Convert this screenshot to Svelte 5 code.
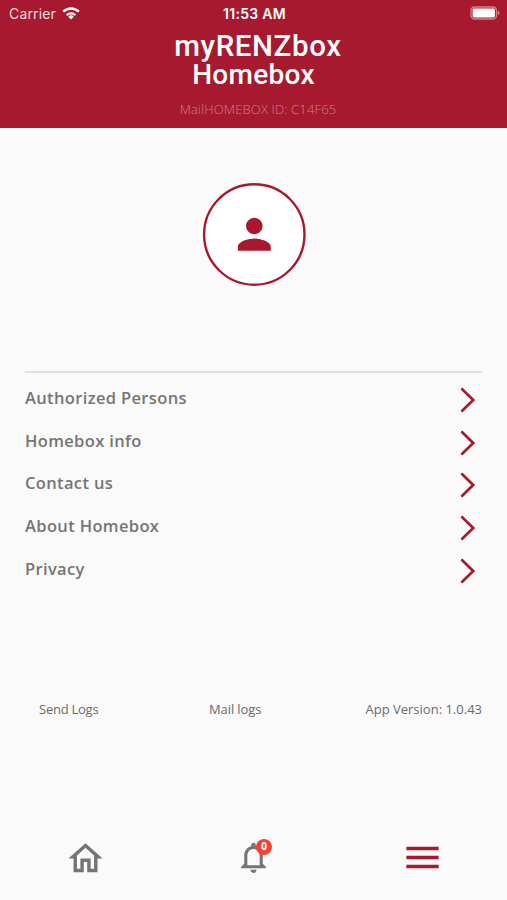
<script>
  let boxId = "C14F65";
  let version = "1.0.43";
  let notifications = 0;
  let active = "menu";

  const links = [
    "Authorized Persons",
    "Homebox info",
    "Contact us",
    "About Homebox",
    "Privacy"
  ];
</script>

<div class="screen">
  <header>
    <div class="status">
      <div class="carrier">
        <span>Carrier</span>
        <svg class="wifi" viewBox="0 0 18 14">
          <path d="M9 13.6l-2.8-2.9a4 4 0 0 1 5.6 0z" />
          <path d="M3.9 8.4a7.3 7.3 0 0 1 10.2 0l-1.5 1.6a5.1 5.1 0 0 0-7.2 0z" />
          <path d="M.4 4.8a12.2 12.2 0 0 1 17.2 0l-1.7 1.8a9.8 9.8 0 0 0-13.8 0z" />
        </svg>
      </div>
      <span class="time">11:53 AM</span>
      <svg class="battery" viewBox="0 0 30 14">
        <rect class="case" x="1" y="1" width="25.5" height="12" rx="3.6" />
        <rect class="level" x="2.6" y="2.6" width="22.3" height="8.8" rx="1.4" />
        <path class="cap" d="M27.8 4.8c2.2.8 2.2 3.6 0 4.4z" />
      </svg>
    </div>
    <h1>
      <span class="brand">myRENZbox</span>
      <span class="product">Homebox</span>
    </h1>
    <p class="box-id">MailHOMEBOX ID: {boxId}</p>
  </header>

  <main>
    <svg class="avatar" viewBox="0 0 104 104">
      <circle cx="52.3" cy="51.5" r="50.2" />
      <path
        transform="translate(27.6 26.6) scale(2.06)"
        d="M12 12c2.21 0 4-1.79 4-4s-1.79-4-4-4-4 1.79-4 4 1.79 4 4 4zm0 2c-2.67 0-8 1.34-8 4v2h16v-2c0-2.66-5.33-4-8-4z"
      />
    </svg>

    <ul class="links">
      {#each links as link}
        <li>
          <span>{link}</span>
          <svg viewBox="0 0 16 26"><path d="M2.2 2.2L13.2 13 2.2 23.8" /></svg>
        </li>
      {/each}
    </ul>

    <div class="logs">
      <span class="send">Send Logs</span>
      <span class="mail">Mail logs</span>
      <span class="version">App Version: {version}</span>
    </div>
  </main>

  <nav>
    <button class:active={active === "home"} aria-label="Home">
      <svg class="home" viewBox="0 0 24 24">
        <path d="M12 5.69l5 4.5V18h-2v-6H9v6H7v-7.81l5-4.5M12 3L2 12h3v8h6v-6h2v6h6v-8h3L12 3z" />
      </svg>
    </button>
    <button class:active={active === "notifications"} aria-label="Notifications">
      <div class="bell-wrap">
        <svg class="bell" viewBox="0 0 24 24">
          <path d="M12 22c1.1 0 2-.9 2-2h-4c0 1.1.9 2 2 2zm6-6v-5c0-3.07-1.63-5.64-4.5-6.32V4c0-.83-.67-1.5-1.5-1.5s-1.5.67-1.5 1.5v.68C7.64 5.36 6 7.92 6 11v5l-2 2v1h16v-1l-2-2zm-2 1H8v-6c0-2.48 1.51-4.5 4-4.5s4 2.02 4 4.5v6z" />
        </svg>
        <span class="badge">{notifications}</span>
      </div>
    </button>
    <button class:active={active === "menu"} aria-label="Menu">
      <svg class="menu" viewBox="0 0 24 24">
        <path d="M3 18h18v-2H3v2zm0-5h18v-2H3v2zm0-7v2h18V6H3z" />
      </svg>
    </button>
  </nav>
</div>

<style>
  :global(body) {
    margin: 0;
    background: #fafafa;
  }

  .screen {
    --red: #a6192e;
    --grey: #757575;
    display: flex;
    flex-direction: column;
    width: 507px;
    height: 900px;
    overflow: hidden;
    background: #fafafa;
    font-family: "Open Sans", "Noto Sans", sans-serif;
  }

  header {
    height: 127.5px;
    flex: none;
    background: var(--red);
    text-align: center;
    color: #fff;
  }
  .status {
    display: grid;
    grid-template-columns: 1fr auto 1fr;
    align-items: center;
    height: 27px;
    padding: 0 7px 0 9px;
    font-family: Inter, sans-serif;
    font-size: 14px;
    line-height: 27px;
  }
  .carrier {
    display: flex;
    align-items: center;
    gap: 6px;
    letter-spacing: 0.15px;
    color: #f6dfe2;
  }
  .wifi {
    width: 18px;
    height: 14px;
    margin-top: -1px;
    fill: #fff;
  }
  .time {
    font-weight: 600;
    letter-spacing: 0.3px;
  }
  .battery {
    width: 30px;
    height: 14px;
    margin-top: -1px;
    justify-self: end;
  }
  .case {
    fill: none;
    stroke: #d9808c;
    stroke-width: 1.3;
  }
  .level {
    fill: #fff;
  }
  .cap {
    fill: #d9808c;
  }

  h1 {
    margin: 6px 0 0;
    font: 500 28px/27.5px Roboto, sans-serif;
    letter-spacing: 0.3px;
  }
  h1 span {
    display: block;
  }
  .brand {
    padding-left: 9px;
    font-size: 29.5px;
    letter-spacing: 0.6px;
  }
  .box-id {
    margin: 11px 0 0;
    padding-left: 9px;
    font-size: 13px;
    font-weight: 300;
    line-height: 20px;
    letter-spacing: 0.15px;
    color: #d08088;
  }

  main {
    flex: 1;
    padding: 55px 25px 0;
  }
  .avatar {
    display: block;
    width: 104px;
    height: 104px;
    margin: 0 auto;
    fill: var(--red);
  }
  .avatar circle {
    fill: #fff;
    stroke: var(--red);
    stroke-width: 2.4;
  }

  .links {
    margin: 84px 0 0;
    padding: 6px 0 0;
    border-top: 2px solid #e0e0e0;
    list-style: none;
  }
  .links li {
    display: flex;
    align-items: center;
    justify-content: space-between;
    height: 42.8px;
    padding-right: 6px;
    font-size: 16.5px;
    font-weight: 600;
    letter-spacing: 0.35px;
    color: var(--grey);
  }
  .links span {
    margin-top: -5px;
  }
  .links svg {
    width: 16px;
    height: 26px;
    fill: none;
    stroke: var(--red);
    stroke-width: 2.7;
    stroke-linecap: round;
  }

  .logs {
    display: grid;
    grid-template-columns: 170px 1fr auto;
    margin-top: 107px;
    padding-left: 14px;
    font-size: 13px;
    line-height: 20px;
    color: #6a6a6a;
  }
  .send {
    letter-spacing: -0.25px;
  }
  .mail {
    letter-spacing: -0.1px;
  }

  nav {
    display: grid;
    grid-template-columns: repeat(3, 1fr);
    height: 85px;
    flex: none;
  }
  nav button {
    display: flex;
    align-items: center;
    justify-content: center;
    padding: 0;
    border: 0;
    background: none;
    fill: var(--grey);
  }
  nav button.active {
    fill: var(--red);
  }
  nav svg {
    display: block;
  }
  .home {
    width: 41px;
    height: 41px;
    margin: 1px 0 0 1px;
  }
  .bell-wrap {
    position: relative;
  }
  .bell {
    width: 37px;
    height: 37px;
  }
  .badge {
    position: absolute;
    top: 0;
    right: 0;
    width: 16px;
    height: 16px;
    border-radius: 50%;
    background: #f44336;
    color: #fff;
    font: 700 10px/15px "Open Sans", sans-serif;
    text-align: center;
  }
  .menu {
    width: 43px;
    height: 43px;
  }
</style>
